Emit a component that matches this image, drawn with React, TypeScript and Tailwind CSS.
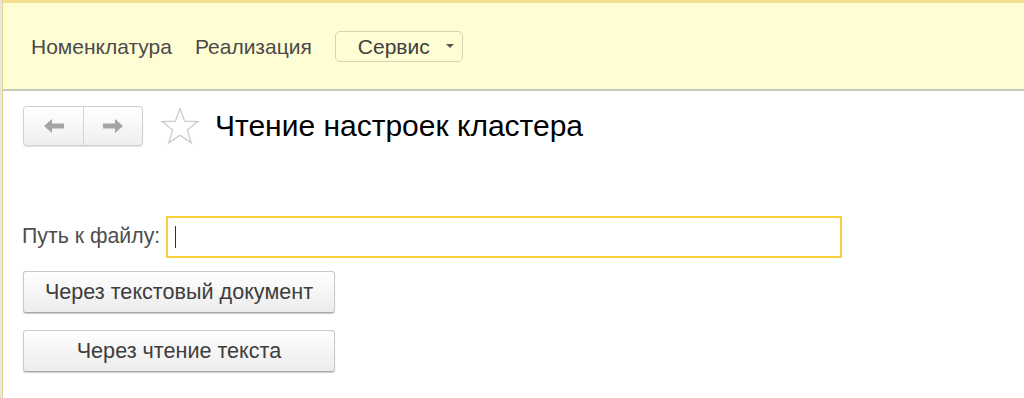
import React from 'react';

const font = { fontFamily: '"Liberation Sans", Arial, sans-serif' };

function StarIcon() {
  return (
    <svg width="40" height="40" viewBox="0 0 40 40" fill="none">
      <path
        d="M20 2.5 L24.6 15.2 L38 15.6 L27.4 23.8 L31.2 36.8 L20 29.2 L8.8 36.8 L12.6 23.8 L2 15.6 L15.4 15.2 Z"
        stroke="#c8c8c8"
        strokeWidth="1.2"
        strokeLinejoin="miter"
        fill="#ffffff"
      />
    </svg>
  );
}

function Arrow({ dir }: { dir: 'left' | 'right' }) {
  return (
    <svg width="22" height="16" viewBox="0 0 22 16">
      {dir === 'left' ? (
        <path d="M1 8 L9 1 L9 5.5 L21 5.5 L21 10.5 L9 10.5 L9 15 Z" fill="#a4a4a4" />
      ) : (
        <path d="M21 8 L13 1 L13 5.5 L1 5.5 L1 10.5 L13 10.5 L13 15 Z" fill="#a4a4a4" />
      )}
    </svg>
  );
}

function FormButton({ label }: { label: string }) {
  return (
    <button className="w-[312px] h-[42px] rounded-[3px] border border-[#c9c9c9] border-b-[#a9a9a9] bg-gradient-to-b from-white to-[#ececec] shadow-[0_1px_1px_rgba(0,0,0,0.2)] text-[21.6px] leading-none text-[#3d3d3d]">
      {label}
    </button>
  );
}

export default function App() {
  return (
    <div className="w-[1024px] h-[398px] bg-white flex overflow-hidden" style={font}>
      <div className="w-[2px] bg-[#e6e6e6]" />
      <div className="w-[1px] bg-[#e2d68a]" />
      <div className="flex-1 flex flex-col">
        <div className="h-[3px] bg-[#f3df8f]" />
        <header className="h-[88px] bg-[#fffdd3] border-b-2 border-[#c8c8c0] flex items-center pl-[28px]">
          <span className="text-[21px] leading-none text-[#4a4a4a]">Номенклатура</span>
          <span className="text-[21px] leading-none text-[#4a4a4a] ml-[23px]">Реализация</span>
          <div className="ml-[23px] w-[128px] h-[31px] rounded-[5px] border border-[#d6d3b0] flex items-center pl-[22px] pr-[8px]">
            <span className="text-[21px] leading-none text-[#3f3f3f]">Сервис</span>
            <span className="ml-auto w-0 h-0 border-l-[4px] border-r-[4px] border-t-[4px] border-l-transparent border-r-transparent border-t-[#555]" />
          </div>
        </header>

        <div className="flex items-center h-[40px] pl-[20px] mt-[15px]">
          <div className="flex h-[40px] w-[120px] rounded-[4px] border border-[#cfcfcf] bg-gradient-to-b from-white to-[#efefef] shadow-[0_1px_1px_rgba(0,0,0,0.12)]">
            <div className="w-[60px] flex items-center justify-center border-r border-[#d4d4d4]">
              <Arrow dir="left" />
            </div>
            <div className="flex-1 flex items-center justify-center">
              <Arrow dir="right" />
            </div>
          </div>
          <div className="ml-[17px]">
            <StarIcon />
          </div>
          <h1 className="ml-[15px] text-[30px] leading-[40px] text-black">Чтение настроек кластера</h1>
        </div>

        <div className="flex items-center h-[42px] pl-[19px] mt-[70px]">
          <span className="text-[21.3px] leading-none text-[#4d4d4d]">Путь к файлу:</span>
          <div className="ml-[6px] w-[676px] h-[42px] border-2 border-[#f7cf3b] flex items-center pl-[7px]">
            <div className="w-[1px] h-[22px] bg-[#333]" />
          </div>
        </div>

        <div className="flex flex-col gap-[17px] pl-[20px] mt-[13px]">
          <FormButton label="Через текстовый документ" />
          <FormButton label="Через чтение текста" />
        </div>
      </div>
    </div>
  );
}
